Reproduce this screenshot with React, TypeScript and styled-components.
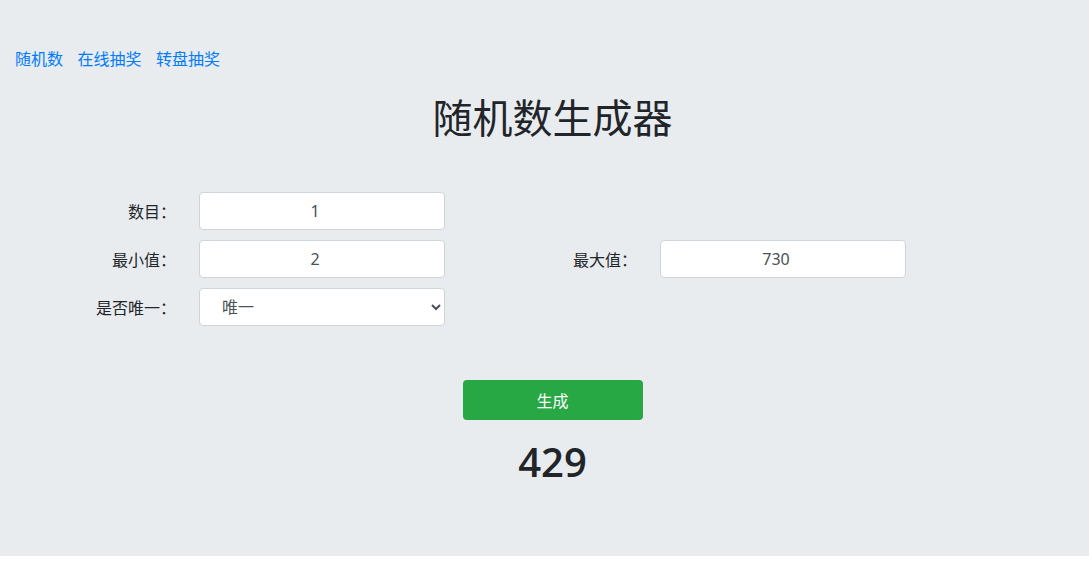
import { useState } from 'react'
import styled, { createGlobalStyle } from 'styled-components'

const GlobalStyle = createGlobalStyle`
	body {
		margin: 0;
		background: #ffffff;
		font-family: "Noto Sans", "Noto Sans CJK SC", sans-serif;
		color: #212529;
	}
`

const Page = styled.div`
	background-color: #e9ecef;
	height: 556px;
	box-sizing: border-box;
	padding-top: 47px;
`
const Nav = styled.nav`
	display: flex;
	gap: 14.5px;
	padding-left: 15px;
	height: 22px;
	align-items: center;
`
const NavLink = styled.a`
	color: #007bff;
	font-size: 16px;
	text-decoration: none;
	cursor: pointer;
`
const Main = styled.main`
	padding-left: 16px;
	display: flex;
	flex-direction: column;
	align-items: center;
`
const Title = styled.h1`
	margin: 25px 0 0;
	font-size: 40px;
	font-weight: 400;
	line-height: 48px;
	color: #212529;
`
const Form = styled.div`
	align-self: flex-start;
	margin: 50px 0 0 -16px;
	display: grid;
	grid-template-columns: 176px 246px 169px 246px;
	column-gap: 23px;
	row-gap: 10px;
`
const Label = styled.label`
	font-size: 16px;
	text-align: right;
	align-self: center;
	color: #212529;
`
const Input = styled.input`
	height: 38px;
	box-sizing: border-box;
	border: 1px solid #ced4da;
	border-radius: 4px;
	background: #fff;
	text-align: center;
	font: inherit;
	font-size: 16px;
	color: #495057;
	outline: none;
	padding: 0 14px 0 0;
`
const Select = styled.select`
	height: 38px;
	box-sizing: border-box;
	border: 1px solid #ced4da;
	border-radius: 4px;
	background: #fff;
	font: inherit;
	font-size: 16px;
	color: #495057;
	padding: 0 8px 0 18px;
	outline: none;
`
const Button = styled.button`
	margin-top: 54px;
	width: 180px;
	height: 40px;
	border: none;
	border-radius: 4px;
	background-color: #28a745;
	color: #fff;
	font: inherit;
	font-size: 16px;
	cursor: pointer;
`
const Result = styled.div`
	margin-top: 18px;
	font-family: "Open Sans", sans-serif;
	font-size: 40px;
	font-weight: 550;
	line-height: 48px;
	color: #212529;
`

const App = () => {
	const [count, setCount] = useState('1')
	const [min, setMin] = useState('2')
	const [max, setMax] = useState('730')
	const [unique, setUnique] = useState('1')
	const [result, setResult] = useState('429')

	const generate = () => {
		const lo = Number(min)
		const hi = Number(max)
		const n = Math.max(1, Number(count) || 1)
		const out: number[] = []
		while (out.length < n) {
			const v = lo + Math.floor(Math.random() * (hi - lo + 1))
			if (unique === '1' && out.includes(v) && out.length < hi - lo + 1) continue
			out.push(v)
		}
		setResult(out.join(' '))
	}

	return (
		<>
			<GlobalStyle />
			<Page>
				<Nav>
					<NavLink>随机数</NavLink>
					<NavLink>在线抽奖</NavLink>
					<NavLink>转盘抽奖</NavLink>
				</Nav>
				<Main>
					<Title>随机数生成器</Title>
					<Form>
						<Label>数目：</Label>
						<Input value={count} onChange={e => setCount(e.target.value)} />
						<span />
						<span />
						<Label>最小值：</Label>
						<Input value={min} onChange={e => setMin(e.target.value)} />
						<Label>最大值：</Label>
						<Input value={max} onChange={e => setMax(e.target.value)} />
						<Label>是否唯一：</Label>
						<Select value={unique} onChange={e => setUnique(e.target.value)}>
							<option value="1">唯一</option>
							<option value="0">不唯一</option>
						</Select>
					</Form>
					<Button onClick={generate}>生成</Button>
					<Result>{result}</Result>
				</Main>
			</Page>
		</>
	)
}

export default App
